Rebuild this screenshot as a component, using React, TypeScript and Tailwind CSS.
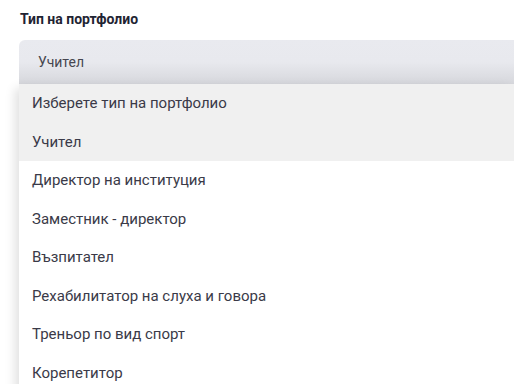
import React from "react";

const items = [
  "Изберете тип на портфолио",
  "Учител",
  "Директор на институция",
  "Заместник - директор",
  "Възпитател",
  "Рехабилитатор на слуха и говора",
  "Треньор по вид спорт",
  "Корепетитор",
];

export default function App() {
  return (
    <div className="w-[514px] h-[384px] overflow-hidden bg-white" style={{ fontFamily: "Roboto, 'Noto Sans', sans-serif" }}>
      <div className="pl-[20px] pt-[11px] h-[40px]">
        <div className="text-[14px] leading-[16px] font-bold text-[#1f2433]">Тип на портфолио</div>
      </div>
      <div className="ml-[19px] h-[44px] rounded-tl-[6px] bg-gradient-to-b from-[#e9eaef] via-[#e8e9ee] to-[#d6d7dc] flex items-center pl-[19px] text-[14px] text-[#46464f]">
        Учител
      </div>
      <div className="ml-[19px] bg-white shadow-[-4px_4px_10px_rgba(0,0,0,0.12)]">
        {items.map((t, i) => (
          <div
            key={t}
            className={`h-[38.5px] flex items-center pl-[13px] text-[15px] text-[#3a3a48] ${i < 2 ? "bg-[#f0f0f0]" : "bg-white"}`}
          >
            {t}
          </div>
        ))}
      </div>
    </div>
  );
}
